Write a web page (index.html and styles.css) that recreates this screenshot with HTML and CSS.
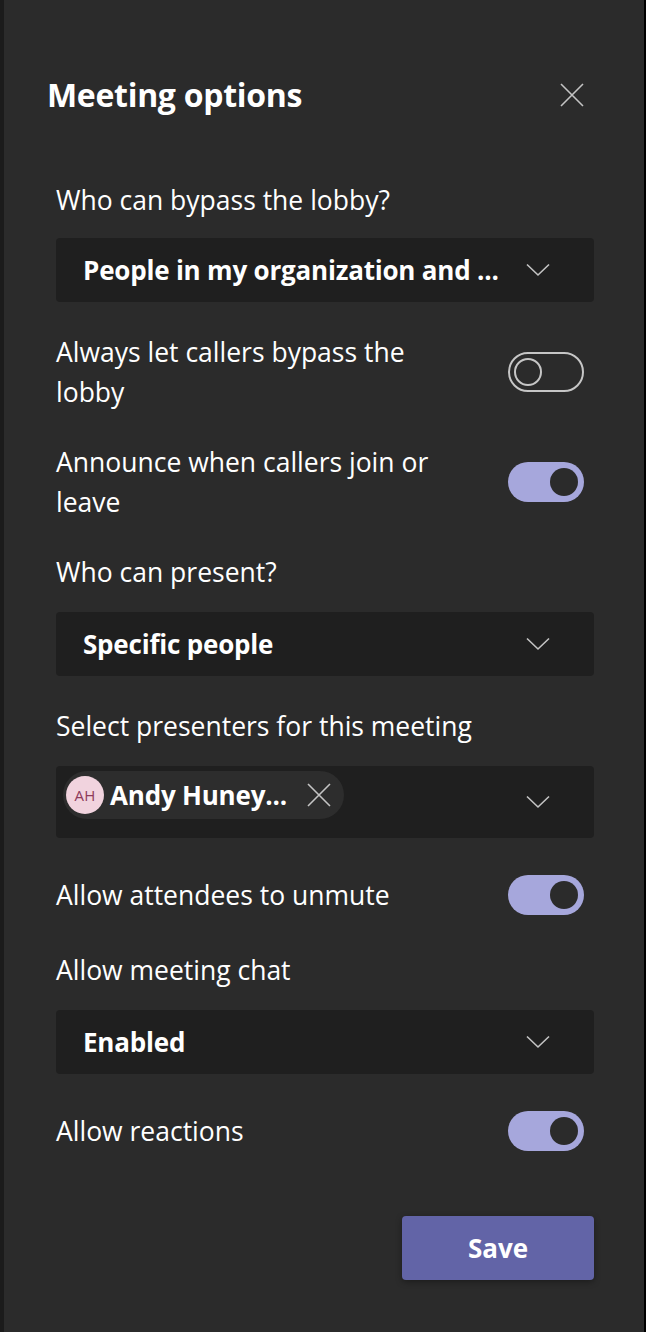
FILE: index.html
```html
<!DOCTYPE html>
<html lang="en">
<head>
<meta charset="utf-8">
<title>Meeting options</title>
<link rel="stylesheet" href="styles.css">
</head>
<body>
<div class="frame">
  <aside class="panel">
    <header class="header">
      <h1 class="title">Meeting options</h1>
      <button class="close" aria-label="Close">
        <svg width="24" height="24" viewBox="0 0 24 24"><path d="M1 1 L23 23 M23 1 L1 23" stroke="#c4c4c4" stroke-width="1.6" fill="none"/></svg>
      </button>
    </header>

    <div class="label first">Who can bypass the lobby?</div>
    <div class="select gap-xs">
      <span class="select-text">People in my organization and ...</span>
      <svg class="chev" width="24" height="14" viewBox="0 0 24 14"><path d="M1 1.5 L12 12 L23 1.5" stroke="#c4c4c4" stroke-width="1.6" fill="none"/></svg>
    </div>

    <div class="toggle-row gap-md">
      <span class="toggle-label">Always let callers bypass the lobby</span>
      <span class="toggle off"><span class="knob"></span></span>
    </div>

    <div class="toggle-row gap-md">
      <span class="toggle-label">Announce when callers join or leave</span>
      <span class="toggle on"><span class="knob"></span></span>
    </div>

    <div class="label gap-md">Who can present?</div>
    <div class="select gap-sm">
      <span class="select-text">Specific people</span>
      <svg class="chev" width="24" height="14" viewBox="0 0 24 14"><path d="M1 1.5 L12 12 L23 1.5" stroke="#c4c4c4" stroke-width="1.6" fill="none"/></svg>
    </div>

    <div class="label gap-md">Select presenters for this meeting</div>
    <div class="picker gap-sm">
      <span class="chip">
        <span class="avatar">AH</span>
        <span class="chip-name">Andy Huney...</span>
        <svg class="chip-x" width="24" height="24" viewBox="0 0 24 24"><path d="M1 1 L23 23 M23 1 L1 23" stroke="#c4c4c4" stroke-width="1.6" fill="none"/></svg>
      </span>
      <svg class="chev picker-chev" width="24" height="14" viewBox="0 0 24 14"><path d="M1 1.5 L12 12 L23 1.5" stroke="#c4c4c4" stroke-width="1.6" fill="none"/></svg>
    </div>

    <div class="toggle-row gap-lg">
      <span class="toggle-label">Allow attendees to unmute</span>
      <span class="toggle on"><span class="knob"></span></span>
    </div>

    <div class="label gap-ml">Allow meeting chat</div>
    <div class="select gap-sm">
      <span class="select-text">Enabled</span>
      <svg class="chev" width="24" height="14" viewBox="0 0 24 14"><path d="M1 1.5 L12 12 L23 1.5" stroke="#c4c4c4" stroke-width="1.6" fill="none"/></svg>
    </div>

    <div class="toggle-row gap-lg">
      <span class="toggle-label">Allow reactions</span>
      <span class="toggle on"><span class="knob"></span></span>
    </div>

    <div class="actions">
      <button class="save">Save</button>
    </div>
  </aside>
</div>
</body>
</html>
```
FILE: styles.css
```css
* { box-sizing: border-box; }

html, body {
  margin: 0;
  padding: 0;
  background: #1b1b1b;
}

body {
  font-family: "Open Sans", "Noto Sans", sans-serif;
  color: #ffffff;
}

.frame {
  display: flex;
  width: 646px;
  height: 1332px;
  padding-left: 4px;
}

.panel {
  flex: 1;
  display: flex;
  flex-direction: column;
  background: #2b2b2b;
  border-right: 2px solid #000000;
  padding: 75px 50px 0 52px;
}

.header {
  display: flex;
  align-items: center;
  justify-content: space-between;
  height: 40px;
  margin-left: -9px;
  margin-right: 10px;
}

.title {
  margin: 0;
  font-size: 32px;
  font-weight: 700;
  line-height: 40px;
  letter-spacing: -0.3px;
}

.close {
  display: flex;
  width: 24px;
  height: 24px;
  padding: 0;
  border: 0;
  background: none;
}

.label,
.toggle-label {
  font-size: 26.5px;
  line-height: 40px;
}

.first { margin-top: 65px; }
.gap-xs { margin-top: 18px; }
.gap-sm { margin-top: 20px; }
.gap-md { margin-top: 30px; }
.gap-ml { margin-top: 35px; }
.gap-lg { margin-top: 37px; }

.select {
  display: flex;
  align-items: center;
  justify-content: space-between;
  height: 64px;
  padding: 0 44px 0 27px;
  background: #1f1f1f;
  border-radius: 4px;
}

.select-text {
  font-size: 26px;
  font-weight: 700;
  letter-spacing: -0.2px;
  white-space: nowrap;
}

.chev { display: block; }

.toggle-row {
  display: flex;
  align-items: center;
  justify-content: space-between;
}

.toggle-label {
  width: 400px;
}

.toggle {
  position: relative;
  flex: none;
  width: 76px;
  height: 40px;
  margin-right: 10px;
  border-radius: 20px;
}

.toggle .knob {
  position: absolute;
  top: 6px;
  width: 28px;
  height: 28px;
  border-radius: 50%;
}

.toggle.off {
  border: 2px solid #c6c6c6;
}

.toggle.off .knob {
  top: 4px;
  left: 4px;
  border: 2px solid #c6c6c6;
}

.toggle.on {
  background: #a6a7dc;
}

.toggle.on .knob {
  right: 6px;
  background: #2b2b2b;
}

.picker {
  display: flex;
  align-items: flex-start;
  justify-content: space-between;
  height: 72px;
  padding: 5px 44px 0 7px;
  background: #1f1f1f;
  border-radius: 4px;
}

.chip {
  display: flex;
  align-items: center;
  height: 48px;
  padding: 0 13px 0 3px;
  background: #2d2d2d;
  border-radius: 24px;
}

.avatar {
  display: flex;
  align-items: center;
  justify-content: center;
  width: 38px;
  height: 38px;
  border-radius: 50%;
  background: #f1d3de;
  color: #8e3a5a;
  font-size: 15px;
  font-weight: 400;
  letter-spacing: 0.3px;
}

.chip-name {
  margin-left: 6px;
  font-size: 26px;
  font-weight: 700;
  letter-spacing: -0.2px;
  white-space: nowrap;
}

.chip-x {
  display: block;
  margin-left: 20px;
}

.picker-chev {
  margin-top: 24px;
}

.actions {
  display: flex;
  justify-content: flex-end;
  margin-top: 65px;
}

.save {
  width: 192px;
  height: 64px;
  border: 0;
  border-radius: 4px;
  background: #6264a7;
  color: #ffffff;
  font-family: inherit;
  font-size: 26px;
  font-weight: 700;
  box-shadow: 0 2px 6px rgba(0, 0, 0, 0.35);
}
```
